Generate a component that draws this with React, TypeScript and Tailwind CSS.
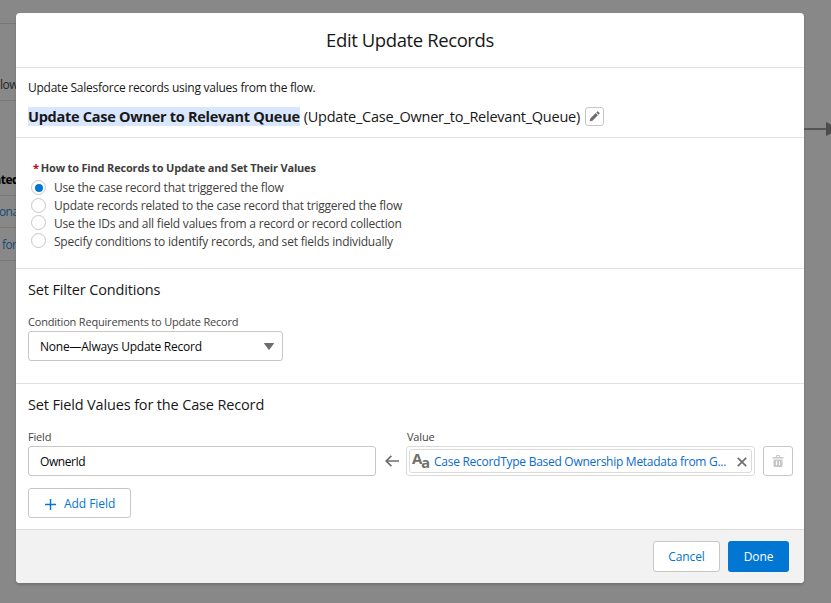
import type { ReactNode } from "react";

const FONT = "font-['Open_Sans','Noto_Sans',sans-serif]";

function Radio({ label, checked, raised }: { label: string; checked?: boolean; raised?: boolean }) {
  return (
    <label className="flex h-[18px] items-center">
      <span
        className={`flex size-[15px] shrink-0 items-center justify-center rounded-full border border-[#c9c7c5] bg-white ${raised ? "-mt-[3px]" : "-mt-px"}`}
      >
        {checked && <span className="size-2 rounded-full bg-[#0176d3]" />}
      </span>
      <span className="ml-2 whitespace-nowrap text-[12px] leading-[18px] tracking-[-0.21px] text-[#3e3e3c]">{label}</span>
    </label>
  );
}

function SectionTitle({ children }: { children: ReactNode }) {
  return <h2 className="whitespace-nowrap text-[14.5px] leading-5 tracking-[-0.15px] text-[#181818]">{children}</h2>;
}

function FieldLabel({ children }: { children: ReactNode }) {
  return <span className="block whitespace-nowrap text-[11px] leading-4 tracking-[-0.19px] text-[#444]">{children}</span>;
}

export default function App() {
  return (
    <div className={`flex h-[603px] w-[831px] overflow-hidden bg-[#888] ${FONT}`}>
      <aside className="w-4 shrink-0 overflow-hidden whitespace-nowrap text-[12px] leading-4 text-[#252525]">
        <div className="h-6 border-b border-[#777]" />
        <div className="h-[77px] border-b border-[#777] pt-[53px] tracking-[-0.5px]">low</div>
        <div className="h-[95px] border-b border-[#777] pt-[71px] font-bold tracking-[-0.5px] text-black">
          <span className="-ml-[6px]">ated</span>
        </div>
        <div className="h-8 border-b border-[#777] pt-2 tracking-[-0.6px] text-[#174a74]">
          <span className="-ml-px">ona</span>
        </div>
        <div className="h-[33px] border-b border-[#777] pl-[2px] pt-[9px] tracking-[-0.6px] text-[#174a74]">for</div>
      </aside>

      <main className="mt-[13px] flex h-[570px] w-[788px] shrink-0 flex-col overflow-hidden rounded bg-white shadow-[0_2px_3px_rgba(0,0,0,0.16)]">
        <header className="flex h-[55px] shrink-0 items-center justify-center border-b border-[#e2e1e0]">
          <h1 className="whitespace-nowrap text-[18.5px] leading-6 tracking-[-0.4px] text-[#181818]">Edit Update Records</h1>
        </header>

        <section className="h-[70px] shrink-0 border-b border-[#e2e1e0] pl-3 pt-3">
          <p className="text-[12px] leading-4 tracking-[-0.25px] text-[#181818]">
            Update Salesforce records using values from the flow.
          </p>
          <div className="mt-[10px] flex items-center whitespace-nowrap text-[14.5px] leading-[19px] text-[#181818]">
            <strong className="bg-[#d8e6fe] font-bold tracking-[-0.27px]">Update Case Owner to Relevant Queue</strong>
            <span className="ml-1 tracking-[-0.24px]">(Update_Case_Owner_to_Relevant_Queue)</span>
            <button className="ml-[5px] mt-px flex size-[19px] items-center justify-center rounded-[3px] border border-[#c9c7c5]">
              <svg viewBox="0 0 12 12" className="size-[11px] fill-[#706e6b]">
                <path d="M.7 11.3 1.4 8.2 7.3 2.3 9.7 4.7 3.8 10.6ZM8 1.6 9 .6Q9.5.2 10 .6L11.4 2Q11.8 2.5 11.4 3L10.4 4Z" />
              </svg>
            </button>
          </div>
        </section>

        <section className="h-[131px] shrink-0 border-b border-[#e2e1e0] pl-[15px] pt-[21px]">
          <h3 className="ml-[2px] flex h-[18px] items-center gap-[2px] whitespace-nowrap text-[11px] font-bold leading-4 tracking-[-0.18px] text-[#3e3e3c]">
            <span className="text-[#c2002b]">*</span>
            <span>How to Find Records to Update and Set Their Values</span>
          </h3>
          <div className="mt-[2px]">
            <Radio checked label="Use the case record that triggered the flow" />
            <Radio label="Update records related to the case record that triggered the flow" />
            <Radio raised label="Use the IDs and all field values from a record or record collection" />
            <Radio raised label="Specify conditions to identify records, and set fields individually" />
          </div>
        </section>

        <section className="h-[115px] shrink-0 border-b border-[#e2e1e0] pl-3 pt-[11px]">
          <SectionTitle>Set Filter Conditions</SectionTitle>
          <div className="mt-[14px]">
            <FieldLabel>Condition Requirements to Update Record</FieldLabel>
          </div>
          <div className="mt-px flex h-[30px] w-[255px] items-center justify-between rounded-[3px] border border-[#c9c7c5] pl-[11px] pr-[8px]">
            <span className="mt-[2px] whitespace-nowrap text-[12px] tracking-[-0.22px] text-[#080707]">None—Always Update Record</span>
            <svg viewBox="0 0 10 7" className="mt-px h-[7px] w-[10px] fill-[#706e6b]">
              <path d="M.3 0H9.7Q10.2.2 9.8.8L5.5 6.6Q5 7.1 4.5 6.6L.2.8Q-.2.2.3 0Z" />
            </svg>
          </div>
        </section>

        <section className="min-h-0 flex-1 pl-3 pt-[11px]">
          <SectionTitle>Set Field Values for the Case Record</SectionTitle>
          <div className="mt-[14px] flex items-end">
            <div>
              <FieldLabel>Field</FieldLabel>
              <div className="mt-px flex h-[30px] w-[348px] items-center rounded-[3px] border border-[#c9c7c5] pl-[11px] pt-[2px] text-[12px] tracking-[-0.45px] text-[#080707]">
                OwnerId
              </div>
            </div>
            <svg viewBox="0 0 14 12" className="mx-[9px] mb-[9px] h-3 w-[14px] fill-none stroke-[#706e6b] stroke-[1.7]">
              <path d="M6.4.8 1.2 6 6.4 11.2M1.2 6H14" />
            </svg>
            <div className="-ml-[2px]">
              <div className="ml-px">
                <FieldLabel>Value</FieldLabel>
              </div>
              <div className="mt-px h-[30px] w-[349px] rounded-[3px] border border-[#dddbda] p-[2px]">
                <div className="flex h-6 items-center rounded-[3px] border border-[#dddbda] pl-[2px] pr-1">
                  <span className="flex h-5 w-[18px] shrink-0 font-bold text-[#706e6b]">
                    <span className="-mt-[3px] text-[15px] leading-5">A</span>
                    <span className="-ml-px mt-[2px] text-[14.5px] leading-5">a</span>
                  </span>
                  <span className="ml-1 mt-[2px] flex-1 whitespace-nowrap text-[12px] tracking-[-0.27px] text-[#0b6bcb]">
                    Case RecordType Based Ownership Metadata from G...
                  </span>
                  <svg viewBox="0 0 10 10" className="mt-px size-[10px] fill-none stroke-[#706e6b] stroke-[1.7]">
                    <path d="m.8.8 8.4 8.4M9.2.8.8 9.2" />
                  </svg>
                </div>
              </div>
            </div>
            <button className="ml-2 flex size-[30px] items-center justify-center rounded-[3px] border border-[#c9c7c5]">
              <svg viewBox="0 0 12 12" className="size-3 fill-[#c9c7c5]">
                <path fillRule="evenodd" d="M1 2H4V1Q4 0 5 0H7Q8 0 8 1V2H11Q11.5 2 11.5 2.5V3.5H.5V2.5Q.5 2 1 2ZM5 2H7V1H5ZM1.5 4.5H10.5V11Q10.5 12 9.5 12H2.5Q1.5 12 1.5 11ZM4 6V10H5V6ZM7 6V10H8V6Z" />
              </svg>
            </button>
          </div>
          <button className="mt-3 flex h-[30px] w-[103px] items-center rounded-[3px] border border-[#c9c7c5] pl-[16px] pt-[2px] text-[12px] text-[#0176d3]">
            <svg viewBox="0 0 11 11" className="size-[11px] fill-none stroke-[#0176d3] stroke-[1.4]">
              <path d="M5.5 0V11M0 5.5H11" />
            </svg>
            <span className="ml-2 whitespace-nowrap tracking-[-0.05px]">Add Field</span>
          </button>
        </section>

        <footer className="flex h-[54px] shrink-0 items-center justify-end gap-2 border-t border-[#dddbda] bg-[#f3f2f2] pr-[15px] text-[12px] tracking-[-0.1px]">
          <button className="h-[31px] w-[67px] rounded-[3px] border border-[#c9c7c5] bg-white text-[#0176d3]">Cancel</button>
          <button className="h-[31px] w-[61px] rounded-[3px] bg-[#0176d3] text-white">Done</button>
        </footer>
      </main>

      <div className="mt-[127px] flex h-[3px] flex-1 items-center">
        <div className="h-[2px] w-[22px] bg-[#555]" />
        <svg viewBox="0 0 14 14" className="h-[14px] w-[5px] shrink-0 fill-[#4d4d4d]" preserveAspectRatio="xMinYMid slice">
          <path d="M0 0 14 7 0 14Z" />
        </svg>
      </div>
    </div>
  );
}
